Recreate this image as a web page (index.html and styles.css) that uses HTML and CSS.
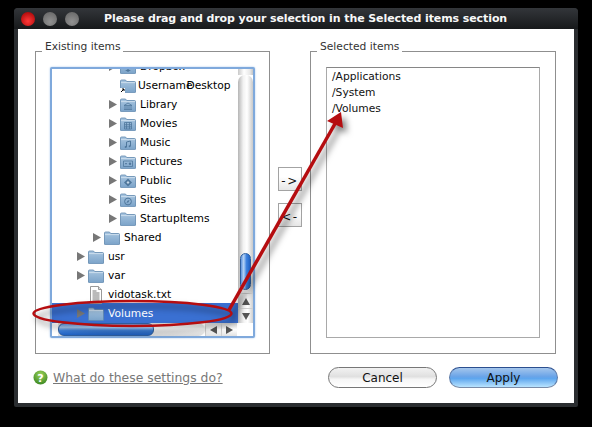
FILE: index.html
```html
<!DOCTYPE html>
<html lang="en">
<head>
<meta charset="utf-8">
<title>Selection</title>
<link rel="stylesheet" href="styles.css">
</head>
<body>
<svg class="defs" width="0" height="0" aria-hidden="true">
  <defs>
    <linearGradient id="fg" x1="0" y1="0" x2="0" y2="1">
      <stop offset="0" stop-color="#a9c6e0"/>
      <stop offset="1" stop-color="#7ba3c9"/>
    </linearGradient>
    <symbol id="folder" viewBox="0 0 16 14">
      <path d="M.5 13V2a1 1 0 0 1 1-1h4l1.2 1.5h7.8a1 1 0 0 1 1 1V13a.6.6 0 0 1-.6.6H1.1A.6.6 0 0 1 .5 13z" fill="url(#fg)" stroke="#6088ad" stroke-width=".8"/>
      <path d="M1 3.6h14" stroke="#d6e4f0" stroke-width=".8"/>
    </symbol>
    <symbol id="tri" viewBox="0 0 8 9">
      <path d="M0 0l8 4.5L0 9z" fill="#777"/>
    </symbol>
  </defs>
</svg>

<main class="window">
  <header class="titlebar">
    <span class="light red"></span>
    <span class="light"></span>
    <span class="light"></span>
    <h1 class="title">Please drag and drop your selection in the Selected items section</h1>
  </header>

  <div class="content">
    <div class="panels">
      <fieldset class="group group-left">
        <legend>Existing items</legend>
        <div class="tree">
          <div class="rows">
            <div class="row l4"><svg class="tri"><use href="#tri"/></svg><svg class="ico" viewBox="0 0 16 14"><use href="#folder" width="16" height="14"/><path d="M5 8l3-2 3 2-3 2zM5 10l3 2 3-2" fill="#4f779c"/></svg><span>Dropbox</span></div>
            <div class="row l4 notri"><svg class="ico" viewBox="0 0 16 14"><use href="#folder" width="16" height="14"/><rect x="0" y="9" width="5" height="5" fill="#fff"/><path d="M1 13l3-3M2 10h2v2" stroke="#000" stroke-width="1" fill="none"/></svg><span class="tight">Username</span><span class="overlap">Desktop</span></div>
            <div class="row l4"><svg class="tri"><use href="#tri"/></svg><svg class="ico" viewBox="0 0 16 14"><use href="#folder" width="16" height="14"/><path d="M4 11.500h8M5 11V8M7 11V8M9 11V8M11 11V8M4 7.500L8 5l4 2.500z" stroke="#4f779c" stroke-width=".8" fill="none"/></svg><span>Library</span></div>
            <div class="row l4"><svg class="tri"><use href="#tri"/></svg><svg class="ico" viewBox="0 0 16 14"><use href="#folder" width="16" height="14"/><path d="M4.500 5.500h7v6.500h-7zM6.500 5.500V12M9.500 5.500V12M4.500 7.700h7M4.500 9.800h7" stroke="#4f779c" stroke-width=".8" fill="none"/></svg><span>Movies</span></div>
            <div class="row l4"><svg class="tri"><use href="#tri"/></svg><svg class="ico" viewBox="0 0 16 14"><use href="#folder" width="16" height="14"/><path d="M6.500 11V6l4-1v5" stroke="#4f779c" fill="none"/><circle cx="5.700" cy="11" r="1" fill="#4f779c"/><circle cx="9.700" cy="10.200" r="1" fill="#4f779c"/></svg><span>Music</span></div>
            <div class="row l4"><svg class="tri"><use href="#tri"/></svg><svg class="ico" viewBox="0 0 16 14"><use href="#folder" width="16" height="14"/><path d="M3.500 6h9v5.500h-9z" stroke="#4f779c" stroke-width=".8" fill="none"/><circle cx="10" cy="8.700" r="1.200" fill="#4f779c"/><path d="M5 8.700h2" stroke="#4f779c"/></svg><span>Pictures</span></div>
            <div class="row l4"><svg class="tri"><use href="#tri"/></svg><svg class="ico" viewBox="0 0 16 14"><use href="#folder" width="16" height="14"/><path d="M8 4.500L12 8.500 8 12.500 4 8.500z" fill="#4f779c"/><path d="M8 7L9.500 8.500 8 10 6.500 8.500z" fill="#c5d8e8"/></svg><span>Public</span></div>
            <div class="row l4"><svg class="tri"><use href="#tri"/></svg><svg class="ico" viewBox="0 0 16 14"><use href="#folder" width="16" height="14"/><circle cx="8" cy="8.500" r="3.400" stroke="#4f779c" fill="none"/><path d="M6.500 10l1-2.200L9.500 7l-1 2.200z" fill="#4f779c"/></svg><span>Sites</span></div>
            <div class="row l4"><svg class="tri"><use href="#tri"/></svg><svg class="ico" viewBox="0 0 16 14"><use href="#folder" width="16" height="14"/></svg><span>StartupItems</span></div>
            <div class="row l3"><svg class="tri"><use href="#tri"/></svg><svg class="ico" viewBox="0 0 16 14"><use href="#folder" width="16" height="14"/></svg><span>Shared</span></div>
            <div class="row l2"><svg class="tri"><use href="#tri"/></svg><svg class="ico" viewBox="0 0 16 14"><use href="#folder" width="16" height="14"/></svg><span>usr</span></div>
            <div class="row l2"><svg class="tri"><use href="#tri"/></svg><svg class="ico" viewBox="0 0 16 14"><use href="#folder" width="16" height="14"/></svg><span>var</span></div>
            <div class="row l2 notri"><svg class="ico doc" viewBox="0 0 14 18"><path d="M1.500.5h8l3 3v14h-11z" fill="#fff" stroke="#999"/><path d="M9.500.5v3h3" fill="#ddd" stroke="#999"/><path d="M3.500 5h4M3.500 7h7M3.500 9h7M3.500 11h7M3.500 13h7M3.500 15h7" stroke="#777"/></svg><span>vidotask.txt</span></div>
            <div class="row l2 selected"><svg class="tri"><use href="#tri"/></svg><svg class="ico" viewBox="0 0 16 14"><use href="#folder" width="16" height="14"/></svg><span>Volumes</span></div>
          </div>
          <div class="vscroll">
            <div class="vcap"></div>
            <div class="vtrack"><div class="vthumb"></div></div>
            <div class="sbtn"><svg width="8" height="7"><path d="M4 0L8 7H0z" fill="#555"/></svg></div>
            <div class="sbtn"><svg width="8" height="7"><path d="M4 7L8 0H0z" fill="#555"/></svg></div>
          </div>
          <div class="hscroll">
            <div class="hcap"></div>
            <div class="htrack"><div class="hthumb"></div></div>
            <div class="hbtn"><svg width="7" height="8"><path d="M0 4L7 0v8z" fill="#555"/></svg></div>
            <div class="hbtn"><svg width="7" height="8"><path d="M7 4L0 0v8z" fill="#555"/></svg></div>
          </div>
          <div class="corner"></div>
        </div>
      </fieldset>

      <div class="movers">
        <button class="mover" type="button">-&gt;</button>
        <button class="mover" type="button">&lt;-</button>
      </div>

      <fieldset class="group group-right">
        <legend>Selected items</legend>
        <ul class="picked">
          <li>/Applications</li>
          <li>/System</li>
          <li>/Volumes</li>
        </ul>
      </fieldset>
    </div>

    <footer class="actions">
      <svg class="help" width="15" height="15" viewBox="0 0 15 15">
        <defs><radialGradient id="hg" cx=".5" cy=".3" r=".8"><stop offset="0" stop-color="#9ed35a"/><stop offset="1" stop-color="#2f7f1c"/></radialGradient></defs>
        <circle cx="7.500" cy="7.500" r="7" fill="url(#hg)"/>
        <text x="7.500" y="11.500" class="help-q">?</text>
      </svg>
      <a class="help-link" href="#">What do these settings do?</a>
      <button class="pill cancel" type="button">Cancel</button>
      <button class="pill apply" type="button">Apply</button>
    </footer>
  </div>
</main>

<svg class="annotation" width="592" height="427" viewBox="0 0 592 427" aria-hidden="true">
  <ellipse cx="132.500" cy="313.500" rx="99" ry="12.500" fill="none" stroke="#b50d10" stroke-width="2.500"/>
  <path d="M229 310L336 122" fill="none" stroke="#b50d10" stroke-width="3.500"/>
  <path d="M341 112L343 128 327 121z" fill="#b50d10"/>
</svg>
</body>
</html>
```
FILE: styles.css
```css
* { box-sizing: border-box; }
html, body { margin: 0; height: 100%; }
body {
  background: #000;
  font-family: "DejaVu Sans", sans-serif;
  font-size: 10.7px;
  color: #111;
  overflow: hidden;
}
.defs { display: block; height: 0; }

.window {
  width: 564px;
  height: 399px;
  margin: 8px 0 0 14px;
  background: #2a2d30;
  border-radius: 4px 4px 2px 2px;
  padding: 0 4px 4px;
  display: flex;
  flex-direction: column;
}
.titlebar {
  height: 21px;
  margin: 0 -4px;
  padding-left: 7px;
  display: flex;
  align-items: center;
  gap: 8px;
  border-radius: 4px 4px 0 0;
  background: linear-gradient(#33363a, #17191b);
}
.light {
  width: 14px;
  height: 14px;
  border-radius: 50%;
  background: radial-gradient(circle at 50% 70%, #929292, #626262);
}
.light.red {
  background: radial-gradient(circle at 50% 65%, #ff3a3a, #b40d0d 75%);
}
.title {
  margin: 0 0 0 17px;
  font-size: 11px;
  letter-spacing: -.09px;
  font-weight: bold;
  color: #f8f8f8;
  white-space: nowrap;
}

.content {
  flex: 1;
  background: #fff;
  display: flex;
  flex-direction: column;
}
.panels {
  display: flex;
  align-items: flex-start;
  padding: 11px 0 0 17px;
}
.group {
  margin: 0;
  height: 314px;
  border: 1px solid #8f8f8f;
  padding: 4px 14px 0;
  min-width: 0;
}
.group-left { width: 235px; }
.group-right { width: 246px; padding-left: 15px; padding-right: 15px; }
.group legend {
  padding: 0 3px 10px;
  margin-left: -8px;
  font-size: 10.7px;
  line-height: 13px;
  color: #333;
}
.group-right legend { margin-left: -9px; }

.tree {
  width: 205px;
  height: 271px;
  border: 2px solid #7fa9dc;
  box-shadow: 0 0 2px #9fc2ea;
  border-radius: 2px;
  display: grid;
  grid-template-columns: 186px 15px;
  grid-template-rows: 254px 13px;
  background: #fff;
}
.rows { overflow: hidden; }
.row {
  height: 19px;
  display: flex;
  align-items: center;
  white-space: nowrap;
  color: #000;
}
.row:first-child { margin-top: -12px; }
.l4 { padding-left: 57px; }
.l3 { padding-left: 41px; }
.l2 { padding-left: 25px; }
.tri { width: 8px; height: 9px; margin-right: 3px; flex: none; }
.notri .ico { margin-left: 11px; }
.ico { width: 16px; height: 14px; margin-right: 4px; flex: none; }
.ico.doc { width: 14px; height: 18px; margin-left: 12px; margin-right: 5px; }
.tight { margin-left: -2px; }
.overlap { margin-left: -6px; }
.selected { background: #3a70d2; color: #fff; height: 20px; margin-top: -1px; padding-top: 1px; }

.vscroll { display: flex; flex-direction: column; grid-column: 2; grid-row: 1; }
.vcap { height: 6px; background: linear-gradient(90deg, #c9c9c9, #fff 40%, #e8e8e8 80%, #c4c4c4); }
.vtrack {
  flex: 1;
  padding: 178px 2px 0;
  background: linear-gradient(90deg, #b5b5b5, #f2f2f2 35%, #fff 60%, #c9c9c9);
  border-radius: 7px 7px 0 0;
}
.vthumb {
  height: 37px;
  border: 1px solid #2f5f9e;
  border-radius: 6px;
  background: linear-gradient(90deg, #5f93dc, #b5d3f5 30%, #3f83df 60%, #1f62c4);
}
.sbtn {
  height: 15px;
  display: flex;
  align-items: center;
  justify-content: center;
  background: linear-gradient(90deg, #c2c2c2, #f4f4f4 40%, #fff 65%, #cfcfcf);
  border-top: 1px solid #cfcfcf;
}
.hscroll { display: flex; grid-column: 1; grid-row: 2; }
.hcap { width: 6px; }
.htrack {
  width: 147px;
  background: linear-gradient(#cfcfcf, #fff 45%, #ddd);
  border-radius: 0 7px 7px 0;
}
.hthumb {
  width: 96px;
  height: 13px;
  border: 1px solid #2f5f9e;
  border-radius: 6px;
  background: linear-gradient(#5f93dc, #a9cbf3 30%, #3f83df 60%, #1f62c4);
}
.hbtn {
  width: 16px;
  flex: none;
  display: flex;
  align-items: center;
  justify-content: center;
  background: linear-gradient(#d0d0d0, #fff 50%, #e2e2e2);
  border-left: 1px solid #cfcfcf;
}
.corner { grid-column: 2; grid-row: 2; background: #fff; }

.movers {
  width: 40px;
  padding: 127px 8px 0;
  display: flex;
  flex-direction: column;
  gap: 12px;
}
.mover {
  width: 24px;
  height: 24px;
  padding: 3px 0 0;
  border: 1px solid #a3a3a3;
  background: linear-gradient(#fff 40%, #e6e6e6);
  font: 12px "DejaVu Sans", sans-serif;
  letter-spacing: 1.5px;
  color: #111;
}

.picked {
  list-style: none;
  margin: 0;
  padding: 1px 0 0 5px;
  width: 214px;
  height: 271px;
  border: 1px solid #a9a9a9;
  border-top-color: #868686;
}
.picked li { height: 16px; line-height: 16px; }

.actions {
  display: flex;
  align-items: center;
  padding: 13px 16px 0 15px;
}
.help { flex: none; margin-right: 5px; }
.help-q { font: bold 11px "DejaVu Sans", sans-serif; fill: #fff; text-anchor: middle; }
.help-link {
  font-size: 12.4px;
  color: #777;
  text-decoration: underline;
}
.pill {
  width: 109px;
  height: 21px;
  padding: 0;
  border-radius: 11px;
  border: 1px solid #777;
  font: 12px "DejaVu Sans", sans-serif;
  color: #111;
}
.cancel {
  margin-left: auto;
  background: linear-gradient(#f2f2f2, #e0e0e0 45%, #f6f6f6 60%, #fff);
}
.apply {
  margin-left: 12px;
  border-color: #2b4f8f #5b7aa8 #7a8ca8;
  background: linear-gradient(#a5c6ec, #6aa4e8 45%, #5ea6ee 55%, #b9e4ff);
}

.annotation {
  position: absolute;
  left: 0;
  top: 0;
  pointer-events: none;
  filter: drop-shadow(4px 5px 3px rgba(0, 0, 0, .5));
}
```
